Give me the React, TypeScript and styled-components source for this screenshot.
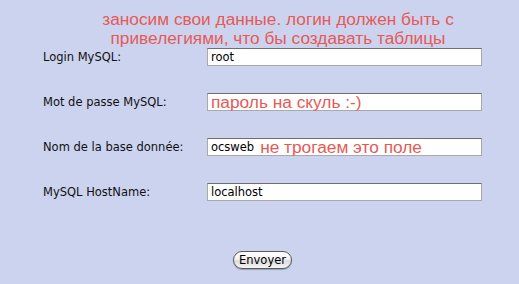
import * as React from 'react';
import styled, { createGlobalStyle } from 'styled-components';

const GlobalStyle = createGlobalStyle`
  html, body {
    margin: 0;
    padding: 0;
    background: #cbd3ef;
  }
`;

const StyledPage = styled.div`
  width: 519px;
  height: 284px;
  background: #cbd3ef;
  overflow: hidden;
`;

const StyledNote = styled.div`
  padding: 10px 0 0 78px;
  width: 400px;
  text-align: center;
  white-space: nowrap;
  font-family: "Liberation Sans", Arial, sans-serif;
  font-size: 17.3px;
  line-height: 19px;
  color: #e65a56;
`;

const StyledForm = styled.div`
  display: grid;
  grid-template-columns: 164px 275px;
  grid-auto-rows: 18px;
  row-gap: 27px;
  padding-left: 43px;
`;

const StyledLabel = styled.div`
  display: flex;
  align-items: center;
  font-family: "DejaVu Sans", Verdana, sans-serif;
  font-size: 11.5px;
  color: #111;
`;

const StyledField = styled.div`
  display: flex;
  align-items: center;
  box-sizing: border-box;
  height: 18px;
  padding: 0 3px;
  background: #fff;
  border: 1px solid #a9a9a9;
  border-top-color: #6f6f6f;
  font-family: "DejaVu Sans", Verdana, sans-serif;
  font-size: 11.5px;
  color: #000;
  white-space: nowrap;
`;

const StyledRemark = styled.span<{ $gap?: number }>`
  margin-left: ${(p) => p.$gap || 0}px;
  font-family: "Liberation Sans", Arial, sans-serif;
  font-size: 17.3px;
  line-height: 18px;
  color: #e65a56;
`;

const StyledFooter = styled.div`
  padding: 49px 0 0 233px;
`;

const StyledButton = styled.button`
  box-sizing: border-box;
  width: 59px;
  height: 18px;
  padding: 0;
  border: 1px solid #5a5a5a;
  border-radius: 9px;
  background: linear-gradient(#ffffff 0%, #f2f2f2 45%, #dcdcdc 55%, #f4f4f4 100%);
  box-shadow: 0 1px 1px rgba(0, 0, 0, 0.25);
  font-family: "DejaVu Sans", Verdana, sans-serif;
  font-size: 11.5px;
  color: #000;
`;

const rows = [
  { label: 'Login MySQL:', value: 'root' },
  { label: 'Mot de passe MySQL:', remark: 'пароль на скуль :-)' },
  { label: 'Nom de la base donnée:', value: 'ocsweb', remark: 'не трогаем это поле', gap: 6 },
  { label: 'MySQL HostName:', value: 'localhost' },
];

const App: React.FC = () => {
  return (
    <StyledPage>
      <GlobalStyle />
      <StyledNote>
        заносим свои данные. логин должен быть с
        <br />
        привелегиями, что бы создавать таблицы
      </StyledNote>
      <StyledForm>
        {rows.map((row) => (
          <React.Fragment key={row.label}>
            <StyledLabel>{row.label}</StyledLabel>
            <StyledField>
              {row.value}
              {row.remark && <StyledRemark $gap={row.gap}>{row.remark}</StyledRemark>}
            </StyledField>
          </React.Fragment>
        ))}
      </StyledForm>
      <StyledFooter>
        <StyledButton>Envoyer</StyledButton>
      </StyledFooter>
    </StyledPage>
  );
};

export default App;
